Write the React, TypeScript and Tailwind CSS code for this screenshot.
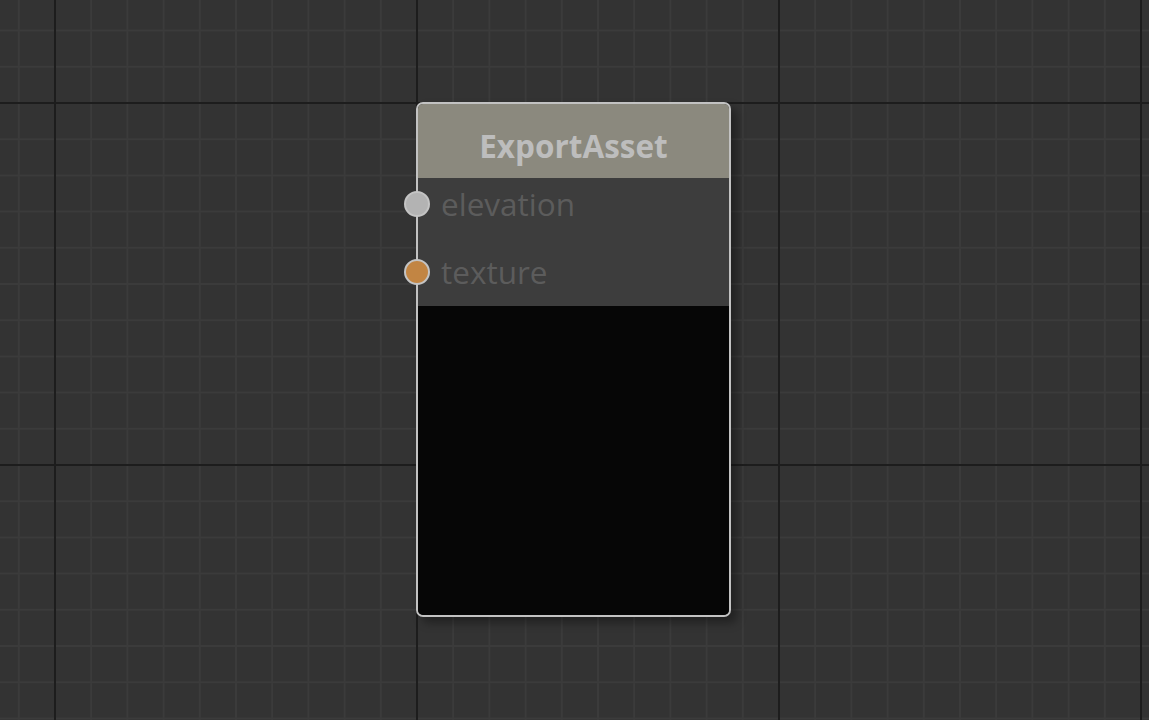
import React from "react";

const W = 1149;
const H = 720;
const STEP = 36.2;
const ORIGIN_X = 55;
const ORIGIN_Y = 103;

function Grid() {
  const minorX: number[] = [];
  const minorY: number[] = [];
  const majorX: number[] = [];
  const majorY: number[] = [];
  for (let k = -20; k < 40; k++) {
    const x = ORIGIN_X + k * STEP;
    if (x < -2 || x > W + 2) continue;
    if (k % 10 === 0) majorX.push(x);
    else minorX.push(x);
  }
  for (let k = -20; k < 40; k++) {
    const y = ORIGIN_Y + k * STEP;
    if (y < -2 || y > H + 2) continue;
    if (k % 10 === 0) majorY.push(y);
    else minorY.push(y);
  }
  return (
    <svg className="absolute inset-0" width={W} height={H}>
      <rect width={W} height={H} fill="#333333" />
      {minorX.map((x) => (
        <line key={"mx" + x} x1={x} x2={x} y1={0} y2={H} stroke="#3b3b3b" strokeWidth={2} />
      ))}
      {minorY.map((y) => (
        <line key={"my" + y} x1={0} x2={W} y1={y} y2={y} stroke="#3b3b3b" strokeWidth={2} />
      ))}
      {majorX.map((x) => (
        <line key={"Mx" + x} x1={x} x2={x} y1={0} y2={H} stroke="#1d1d1d" strokeWidth={2} />
      ))}
      {majorY.map((y) => (
        <line key={"My" + y} x1={0} x2={W} y1={y} y2={y} stroke="#1d1d1d" strokeWidth={2} />
      ))}
    </svg>
  );
}

function Port({ label, color }: { label: string; color: string }) {
  return (
    <div className="relative flex h-[52px] items-center pl-[23px]">
      <div
        className="absolute left-[-14px] top-1/2 h-[26px] w-[26px] -translate-y-1/2 rounded-full border-[2px] border-[#c4c4c4]"
        style={{ backgroundColor: color }}
      />
      <span className="text-[31.5px] leading-none text-[#5c5c5c]">{label}</span>
    </div>
  );
}

export default function App() {
  return (
    <div
      className="relative h-[720px] w-[1149px] overflow-hidden bg-[#333333]"
      style={{ fontFamily: '"Open Sans", "Noto Sans", sans-serif' }}
    >
      <Grid />
      <div className="absolute left-[416px] top-[102px] flex h-[515px] w-[315px] flex-col overflow-visible rounded-[7px] border-[2px] border-[#c2c2c2] shadow-[6px_6px_10px_rgba(0,0,0,0.35)]">
        <div className="flex h-[74px] items-center justify-center rounded-t-[5px] bg-[#8b897e] pt-[10px]">
          <span className="text-[31.5px] font-bold leading-none text-[#bdbdbd]">ExportAsset</span>
        </div>
        <div className="flex h-[128px] flex-col gap-[16px] bg-[#3d3d3d]">
          <Port label="elevation" color="#b3b3b3" />
          <Port label="texture" color="#c28543" />
        </div>
        <div className="flex-1 rounded-b-[5px] bg-[#060606]" />
      </div>
    </div>
  );
}
